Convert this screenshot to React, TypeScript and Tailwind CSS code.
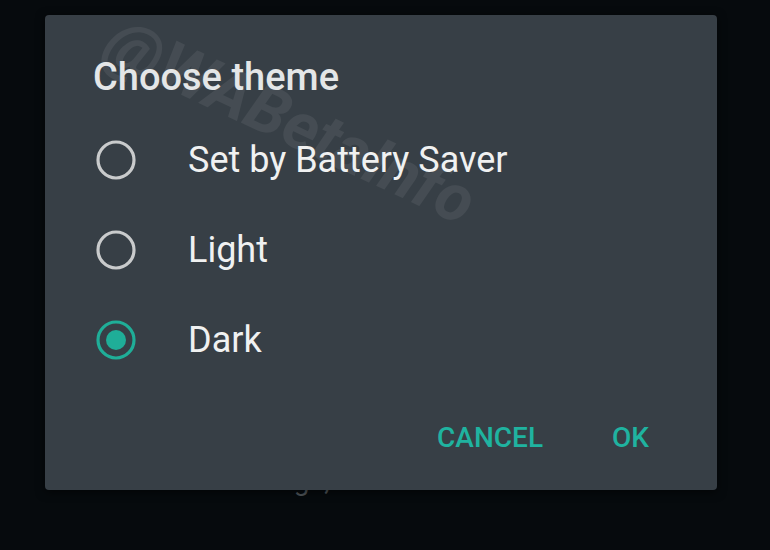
import React from "react";

function Radio({ checked }: { checked?: boolean }) {
  return (
    <svg width="42" height="42" viewBox="0 0 42 42" className="shrink-0">
      <circle
        cx="21"
        cy="21"
        r="18"
        fill="none"
        stroke={checked ? "#1fae98" : "#c9cbcc"}
        strokeWidth="3.2"
      />
      {checked && <circle cx="21" cy="21" r="10" fill="#1fae98" />}
    </svg>
  );
}

export default function App() {
  const options = [
    { label: "Set by Battery Saver", checked: false },
    { label: "Light", checked: false },
    { label: "Dark", checked: true },
  ];
  return (
    <div
      className="relative w-[770px] h-[550px] overflow-hidden bg-[#060a0d]"
      style={{ fontFamily: "Roboto, 'Noto Sans', sans-serif" }}
    >
      <div className="pt-[464px] pl-[137px] text-[28px] leading-[34px] text-[#50565b]">
        Network usage, auto-download
      </div>

      <div className="absolute left-[45px] top-[15px] w-[672px] h-[475px] overflow-hidden rounded-[4px] bg-[#373f46] shadow-[0_2px_10px_rgba(0,0,0,0.6)]">
        <span className="pointer-events-none absolute left-[78px] top-[-8px] origin-top-left rotate-[25deg] whitespace-nowrap text-[66px] leading-none font-bold italic text-white/[0.07]">
          @WABetaInfo
        </span>

        <div className="relative flex flex-col pt-[40px]">
          <div className="pl-[48px] text-[38px] leading-[44px] font-medium text-[#e4e6e7]">
            Choose theme
          </div>
          <div className="mt-[16px] flex flex-col">
            {options.map((o) => (
              <div key={o.label} className="flex h-[90px] items-center pl-[50px]">
                <Radio checked={o.checked} />
                <span className="ml-[51px] text-[36px] leading-[42px] text-[#f0f1f1]">
                  {o.label}
                </span>
              </div>
            ))}
          </div>
          <div className="mt-[33px] flex h-[40px] items-center justify-end gap-[69px] pr-[68px] text-[28px] font-medium text-[#1fb3a0]">
            <span>CANCEL</span>
            <span>OK</span>
          </div>
        </div>
      </div>
    </div>
  );
}
